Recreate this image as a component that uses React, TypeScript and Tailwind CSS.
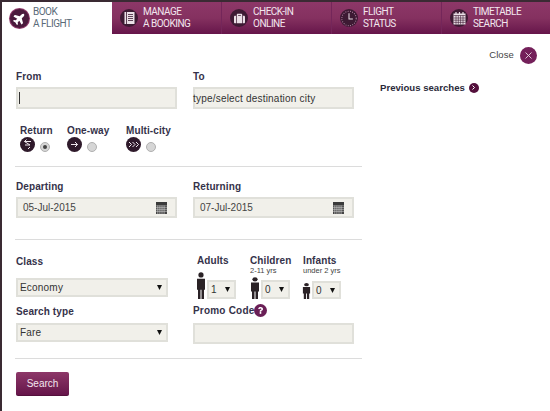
import React from "react";
import { FaPlane, FaSuitcase, FaQuestion } from "react-icons/fa";

const font = "font-['Liberation_Sans',Arial,sans-serif]";
const label = "text-[10px] leading-[13px] font-bold text-[#35324a] tracking-[0.1px]";
const field = "bg-[#f1f0ea] border-2 border-[#e0e0da] text-[#333] text-[10px]";
const tabText = "text-[10px] leading-[12px] font-['Roboto',sans-serif] uppercase tracking-[-0.5px]";

function Circle({ size, className = "", children }: { size: number; className?: string; children?: React.ReactNode }) {
  return (
    <span className={`flex items-center justify-center rounded-full shrink-0 ${className}`} style={{ width: size, height: size }}>
      {children}
    </span>
  );
}

function BookIcon() {
  return (
    <svg width="11" height="12" viewBox="0 0 11 12">
      <rect x="0.5" y="0" width="10" height="12" fill="#eadfe6" />
      <rect x="2.2" y="0" width="0.8" height="12" fill="#3d1a33" />
      <path d="M4 2.5h5M4 4.5h5M4 6.5h5M4 8.5h5" stroke="#3d1a33" strokeWidth="0.8" />
    </svg>
  );
}

function ClockIcon() {
  return (
    <svg width="21" height="21" viewBox="0 0 21 21">
      <circle cx="10.5" cy="10.5" r="8.4" fill="none" stroke="#b58aa8" strokeWidth="1.2" strokeDasharray="1 1.7" />
      <path d="M10.5 4.5v6.5h4.5" fill="none" stroke="#eadfe6" strokeWidth="1.2" />
    </svg>
  );
}

function CalendarIcon() {
  return (
    <svg width="13" height="13" viewBox="0 0 13 13">
      <rect x="0.5" y="1.5" width="12" height="11" fill="#eadfe6" />
      <path d="M3 0v3M6.5 0v3M10 0v3" stroke="#eadfe6" strokeWidth="1.2" />
      <path d="M0.5 3.5h12M0.5 6h12M0.5 8.2h12M0.5 10.4h12M3 3.5v9M5.3 3.5v9M7.6 3.5v9M10 3.5v9" stroke="#3d1a33" strokeWidth="0.6" />
    </svg>
  );
}

function Tab({ l1, l2, icon, width, border = true }: { l1: string; l2: string; icon: React.ReactNode; width: number; border?: boolean }) {
  return (
    <div
      className={`flex items-center h-full pl-[8px] gap-[5px] bg-gradient-to-b from-[#8d3768] via-[#853160] to-[#66154a] ${border ? "border-r border-[#74265a]" : ""}`}
      style={{ width }}
    >
      <Circle size={18} className="bg-[#3d1a33]">{icon}</Circle>
      <div className={`${tabText} text-[#f2e6ee]`}>
        <div>{l1}</div>
        <div>{l2}</div>
      </div>
    </div>
  );
}

function SmallCal() {
  return (
    <svg width="11" height="12" viewBox="0 0 11 12" className="shrink-0">
      <rect x="0" y="0" width="11" height="3.5" fill="#3a3a3a" />
      <rect x="0" y="3.5" width="11" height="8.5" fill="#444" />
      <path d="M0 5.3h11M0 7.3h11M0 9.3h11M1.8 3.5v8.5M3.9 3.5v8.5M6 3.5v8.5M8.1 3.5v8.5" stroke="#d8d8d8" strokeWidth="0.6" />
    </svg>
  );
}

function DateField({ value }: { value: string }) {
  return (
    <div className={`${field} h-[21px] flex items-center justify-between pl-[5px] pr-[8px] text-[#444]`}>
      <span>{value}</span>
      <SmallCal />
    </div>
  );
}

function Arrow() {
  return (
    <svg width="5" height="5" viewBox="0 0 5 5"><path d="M0 0h5L2.5 5z" fill="#111" /></svg>
  );
}

function Select({ value, width, h = 19 }: { value: string; width?: number; h?: number }) {
  return (
    <div className={`${field} flex items-center justify-between pl-[2px] pr-[4px] tracking-[0.2px]`} style={{ width, height: h }}>
      <span>{value}</span>
      <Arrow />
    </div>
  );
}

function Radio({ on }: { on?: boolean }) {
  return (
    <span className="mt-[4px] w-[10px] h-[10px] rounded-full bg-[#d6d6d6] border border-[#b0b0b0] flex items-center justify-center">
      {on && <span className="w-[4px] h-[4px] rounded-full bg-[#444]" />}
    </span>
  );
}

function TripOption({ name, icon, on, width }: { name: string; icon: React.ReactNode; on?: boolean; width: number }) {
  return (
    <div style={{ width }}>
      <div className={label}>{name}</div>
      <div className="flex items-center gap-[5px]">
        <Circle size={15} className="bg-[#2f1a2b]">{icon}</Circle>
        <Radio on={on} />
      </div>
    </div>
  );
}

function Person({ w, h }: { w: number; h: number }) {
  return (
    <svg width={w} height={h} viewBox="0 0 10 26" preserveAspectRatio="none" className="shrink-0">
      <circle cx="5" cy="2.8" r="2.6" fill="#2a2226" />
      <path d="M1 6.5h8v10.5H8v9H5.5v-9h-1v9H2v-9H1z" fill="#2a2226" />
    </svg>
  );
}

function Pax({ w, h, value, selW, selH }: { w: number; h: number; value: string; selW: number; selH: number }) {
  return (
    <div className="flex items-end gap-[1px] h-[19px]">
      <Person w={w} h={h} />
      <Select value={value} width={selW} h={selH} />
    </div>
  );
}

export default function App() {
  return (
    <div className={`w-[550px] h-[411px] overflow-hidden bg-[#3a2a33] pt-[2px] pl-[2px] ${font}`}>
      <div className="h-[409px] bg-white flex flex-col">
        <div className="flex h-[32px] shrink-0">
          <div className="w-[110px] h-full bg-white flex items-center pl-[8px] gap-[4px]">
            <Circle size={19} className="bg-[#4a1a3c] ring-1 ring-[#8d3768]">
              <FaPlane className="text-white -rotate-45" size={13} />
            </Circle>
            <div className={`${tabText} text-[#5a6a78]`}>
              <div>Book</div>
              <div>A Flight</div>
            </div>
          </div>
          <Tab l1="Manage" l2="A Booking" width={110} icon={<BookIcon />} />
          <Tab l1="Check-in" l2="Online" width={110} icon={<FaSuitcase className="text-[#eadfe6]" size={11} />} />
          <Tab l1="Flight" l2="Status" width={110} icon={<ClockIcon />} />
          <Tab l1="Timetable" l2="Search" width={108} border={false} icon={<CalendarIcon />} />
        </div>

        <div className="flex flex-1 relative">
          <div className="w-[360px] pl-[13px] shrink-0">
            <div className="pl-[1px] w-[338px] pt-[36px]">
              <div className="grid grid-cols-[161px_161px] gap-x-[16px]">
                <div>
                  <div className={label}>From</div>
                  <div className={`${field} h-[22px] mt-[4px] flex items-center pl-[1px]`}>
                    <span className="w-[1px] h-[12px] bg-[#333]" />
                  </div>
                </div>
                <div>
                  <div className={label}>To</div>
                  <div className={`${field} h-[22px] mt-[4px] flex items-center tracking-[0.2px]`}>
                    <span className="-ml-[2px]">type/select destination city</span>
                  </div>
                </div>
              </div>

              <div className="flex pl-[4px] mt-[15px]">
                <TripOption name="Return" width={47} on icon={
                  <svg width="9" height="11" viewBox="0 0 9 11"><path d="M8 2.5H1.5L7 6H2M3.5 0.5L1.5 2.5M5 10l2-2" fill="none" stroke="#f0e8ee" strokeWidth="1" /></svg>
                } />
                <TripOption name="One-way" width={59} icon={
                  <svg width="8" height="7" viewBox="0 0 8 7"><path d="M0 3.5h6.5M4 1l2.5 2.5L4 6" fill="none" stroke="#f0e8ee" strokeWidth="1" /></svg>
                } />
                <TripOption name="Multi-city" width={70} icon={
                  <svg width="11" height="7" viewBox="0 0 11 7"><path d="M1 1l2.5 2.5L1 6M4.5 1L7 3.5 4.5 6M8 1l2.5 2.5L8 6" fill="none" stroke="#f0e8ee" strokeWidth="1" /></svg>
                } />
              </div>
            </div>

            <div className="h-[1px] bg-[#dcdcdc] w-[347px] mt-[14px]" />

            <div className="pl-[1px] pt-[13px] grid grid-cols-[161px_161px] gap-x-[16px]">
              <div>
                <div className={label}>Departing</div>
                <div className="mt-[4px]"><DateField value="05-Jul-2015" /></div>
              </div>
              <div>
                <div className={label}>Returning</div>
                <div className="mt-[4px]"><DateField value="07-Jul-2015" /></div>
              </div>
            </div>

            <div className="h-[1px] bg-[#dcdcdc] w-[347px] mt-[21px]" />

            <div className="pl-[1px] pt-[14px] grid grid-cols-[161px_161px] gap-x-[16px]">
              <div className="pt-[1px]">
                <div className={label}>Class</div>
                <div className="mt-[10px] w-[152px]"><Select value="Economy" /></div>
                <div className={`${label} mt-[8px]`}>Search type</div>
                <div className="mt-[5px] w-[152px]"><Select value="Fare" /></div>
              </div>
              <div>
                <div className="flex pl-[4px] h-[21px]">
                  <div className={`${label} w-[53px]`}>Adults</div>
                  <div className="w-[53px]">
                    <div className={label}>Children</div>
                    <div className="text-[7.5px] leading-[8px] text-[#444]">2-11 yrs</div>
                  </div>
                  <div>
                    <div className={label}>Infants</div>
                    <div className="text-[7.5px] leading-[8px] text-[#444]">under 2 yrs</div>
                  </div>
                </div>
                <div className="flex pl-[3px] mt-[5px] h-[19px] items-end">
                  <div className="w-[54px]"><Pax w={10} h={27} value="1" selW={29} selH={19} /></div>
                  <div className="w-[52px]"><Pax w={10} h={22} value="0" selW={29} selH={19} /></div>
                  <div><Pax w={9} h={16} value="0" selW={29} selH={18} /></div>
                </div>
                <div className="flex items-center mt-[4px] h-[14px]">
                  <span className={`${label} tracking-[0.2px]`}>Promo Code</span>
                  <Circle size={13} className="bg-[#6a1f56]"><FaQuestion className="text-white" size={7} /></Circle>
                </div>
                <div className={`${field} h-[21px] mt-[6px]`} />
              </div>
            </div>

            <div className="h-[1px] bg-[#dcdcdc] w-[347px] mt-[14px]" />

            <div className="pl-[1px] mt-[11px]">
              <button className="w-[53px] h-[24px] rounded-[2px] bg-gradient-to-b from-[#8d3768] to-[#66154a] text-[#f2e6ee] text-[10px] border-b border-[#54103c]">Search</button>
            </div>
          </div>

          <div className="flex-1 relative">
            <div className="flex justify-end items-center pt-[13px] pr-[13px] gap-[6px]">
              <span className="text-[9.5px] text-[#444] tracking-[0.1px]">Close</span>
              <Circle size={17} className="bg-[#74205a]">
                <svg width="7" height="7" viewBox="0 0 7 7"><path d="M0.5 0.5l6 6M6.5 0.5l-6 6" stroke="#e8d8e2" strokeWidth="0.9" /></svg>
              </Circle>
            </div>
            <div className="flex items-center gap-[4px] pl-[18px] mt-[17px]">
              <span className="text-[9.6px] leading-[13px] font-bold text-[#2b2a3a]">Previous searches</span>
              <Circle size={10} className="bg-[#54103c]">
                <svg width="5" height="5" viewBox="0 0 5 5"><path d="M1.5 0.5l2 2-2 2" fill="none" stroke="#fff" strokeWidth="1" /></svg>
              </Circle>
            </div>
          </div>
        </div>
      </div>
    </div>
  );
}
